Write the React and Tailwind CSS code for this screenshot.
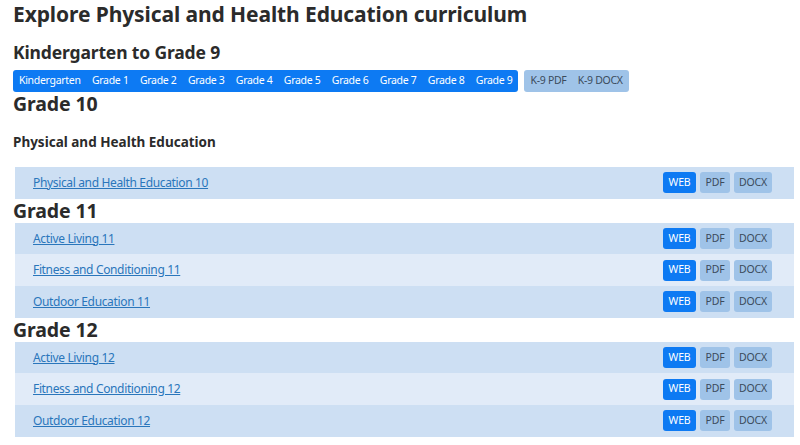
import React from "react";

const grades = ["Kindergarten", "Grade 1", "Grade 2", "Grade 3", "Grade 4", "Grade 5", "Grade 6", "Grade 7", "Grade 8", "Grade 9"];

const sections = [
  { title: "Grade 10", sub: "Physical and Health Education", courses: ["Physical and Health Education 10"] },
  { title: "Grade 11", courses: ["Active Living 11", "Fitness and Conditioning 11", "Outdoor Education 11"] },
  { title: "Grade 12", courses: ["Active Living 12", "Fitness and Conditioning 12", "Outdoor Education 12"] },
];

const CourseRow = ({ name, odd }) => (
  <div className={`flex items-center justify-between h-[31.7px] pl-[18px] pr-[22px] ${odd ? "bg-[#cddff3]" : "bg-[#e1ebf8]"}`}>
    <a href="#" className="text-[12px] tracking-[-0.35px] text-[#2a76bb] underline">{name}</a>
    <div className="flex gap-[4px] text-[10.5px] tracking-[-0.2px]">
      <span className="bg-[#0d7af3] text-white rounded-[3px] w-[33px] justify-center h-[21px] flex items-center">WEB</span>
      <span className="bg-[#9fc3e8] text-[#3b4b5c] rounded-[3px] w-[30px] justify-center h-[21px] flex items-center">PDF</span>
      <span className="bg-[#9fc3e8] text-[#3b4b5c] rounded-[3px] w-[38px] justify-center h-[21px] flex items-center">DOCX</span>
    </div>
  </div>
);

export default function App() {
  return (
    <div className="bg-white px-[13px] text-[#2b2b2b]" style={{ fontFamily: '"Noto Sans", "Open Sans", sans-serif' }}>
      <h1 className="text-[21px] font-bold leading-[28px] tracking-[-0.1px]">Explore Physical and Health Education curriculum</h1>
      <h2 className="text-[17.5px] font-bold leading-[24px] tracking-[-0.15px] mt-[12px]">Kindergarten to Grade 9</h2>
      <div className="flex gap-[6px] mt-[6px]">
        <div className="flex bg-[#0d7af3] rounded-[3px] h-[22px] items-center px-[6px] gap-[11.3px] text-[10.5px] tracking-[-0.3px] text-white">
          {grades.map((g) => (
            <span key={g}>{g}</span>
          ))}
        </div>
        <div className="flex bg-[#9fc3e8] rounded-[3px] h-[22px] items-center px-[6px] gap-[11.3px] text-[10.5px] tracking-[-0.3px] text-[#3b4b5c]">
          <span>K-9 PDF</span>
          <span>K-9 DOCX</span>
        </div>
      </div>
      {sections.map((s) => (
        <div key={s.title}>
          <h3 className="text-[19.5px] font-bold leading-[24px] tracking-[-0.1px]">{s.title}</h3>
          {s.sub && <h4 className="text-[13.5px] font-bold leading-[20px] mt-[16px] mb-[15px]">{s.sub}</h4>}
          <div className="ml-[2px] mr-[-7px]">
            {s.courses.map((c, i) => (
              <CourseRow key={c} name={c} odd={i % 2 === 0} />
            ))}
          </div>
        </div>
      ))}
    </div>
  );
}
